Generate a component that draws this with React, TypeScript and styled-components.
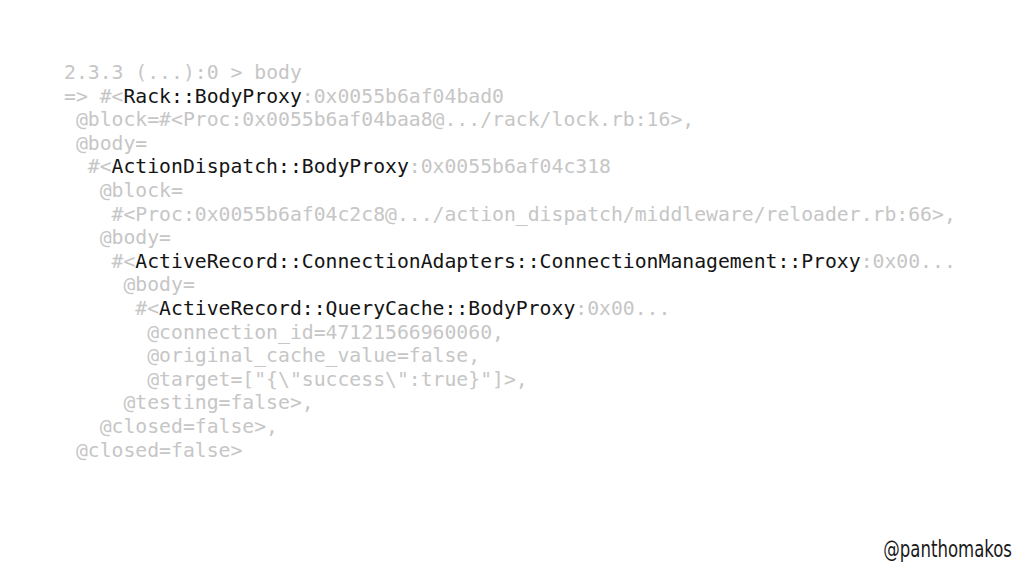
import React from 'react'
import styled, { createGlobalStyle } from 'styled-components'

const GlobalStyle = createGlobalStyle`
  html, body {
    margin: 0;
    padding: 0;
    background: #ffffff;
  }
`

const Slide = styled.div`
  width: 1024px;
  height: 576px;
  box-sizing: border-box;
  padding: 61px 12px 14px 64px;
  display: flex;
  flex-direction: column;
  background: #ffffff;
  overflow: hidden;
`

const Code = styled.div`
  font-family: 'DejaVu Sans Mono', 'Liberation Mono', monospace;
  font-size: 19.75px;
  line-height: 23.6px;
  color: #c6c6c6;
  white-space: pre;
`

const Line = styled.div<{ $indent?: number }>`
  padding-left: ${(p) => (p.$indent || 0)}ch;
`

const Klass = styled.span`
  color: #141414;
`

const Handle = styled.div`
  margin-top: auto;
  align-self: flex-end;
  font-family: 'Liberation Sans Narrow', 'DejaVu Sans Condensed', 'Liberation Sans', sans-serif;
  font-size: 23px;
  color: #1a1a1a;
  transform: scaleX(0.8);
  transform-origin: right center;
`

type Row = { indent: number; pre: string; klass?: string; post?: string }

const rows: Row[] = [
  { indent: 0, pre: '2.3.3 (...):0 > body' },
  { indent: 0, pre: '=> #<', klass: 'Rack::BodyProxy', post: ':0x0055b6af04bad0' },
  { indent: 1, pre: '@block=#<Proc:0x0055b6af04baa8@.../rack/lock.rb:16>,' },
  { indent: 1, pre: '@body=' },
  { indent: 2, pre: '#<', klass: 'ActionDispatch::BodyProxy', post: ':0x0055b6af04c318' },
  { indent: 3, pre: '@block=' },
  { indent: 4, pre: '#<Proc:0x0055b6af04c2c8@.../action_dispatch/middleware/reloader.rb:66>,' },
  { indent: 3, pre: '@body=' },
  {
    indent: 4,
    pre: '#<',
    klass: 'ActiveRecord::ConnectionAdapters::ConnectionManagement::Proxy',
    post: ':0x00...',
  },
  { indent: 5, pre: '@body=' },
  { indent: 6, pre: '#<', klass: 'ActiveRecord::QueryCache::BodyProxy', post: ':0x00...' },
  { indent: 7, pre: '@connection_id=47121566960060,' },
  { indent: 7, pre: '@original_cache_value=false,' },
  { indent: 7, pre: '@target=["{\\"success\\":true}"]>,' },
  { indent: 5, pre: '@testing=false>,' },
  { indent: 3, pre: '@closed=false>,' },
  { indent: 1, pre: '@closed=false>' },
]

const App: React.FC = () => {
  return (
    <Slide>
      <GlobalStyle />
      <Code>
        {rows.map((r, i) => (
          <Line key={i} $indent={r.indent}>
            {r.pre}
            {r.klass && <Klass>{r.klass}</Klass>}
            {r.post}
          </Line>
        ))}
      </Code>
      <Handle>@panthomakos</Handle>
    </Slide>
  )
}

export default App
